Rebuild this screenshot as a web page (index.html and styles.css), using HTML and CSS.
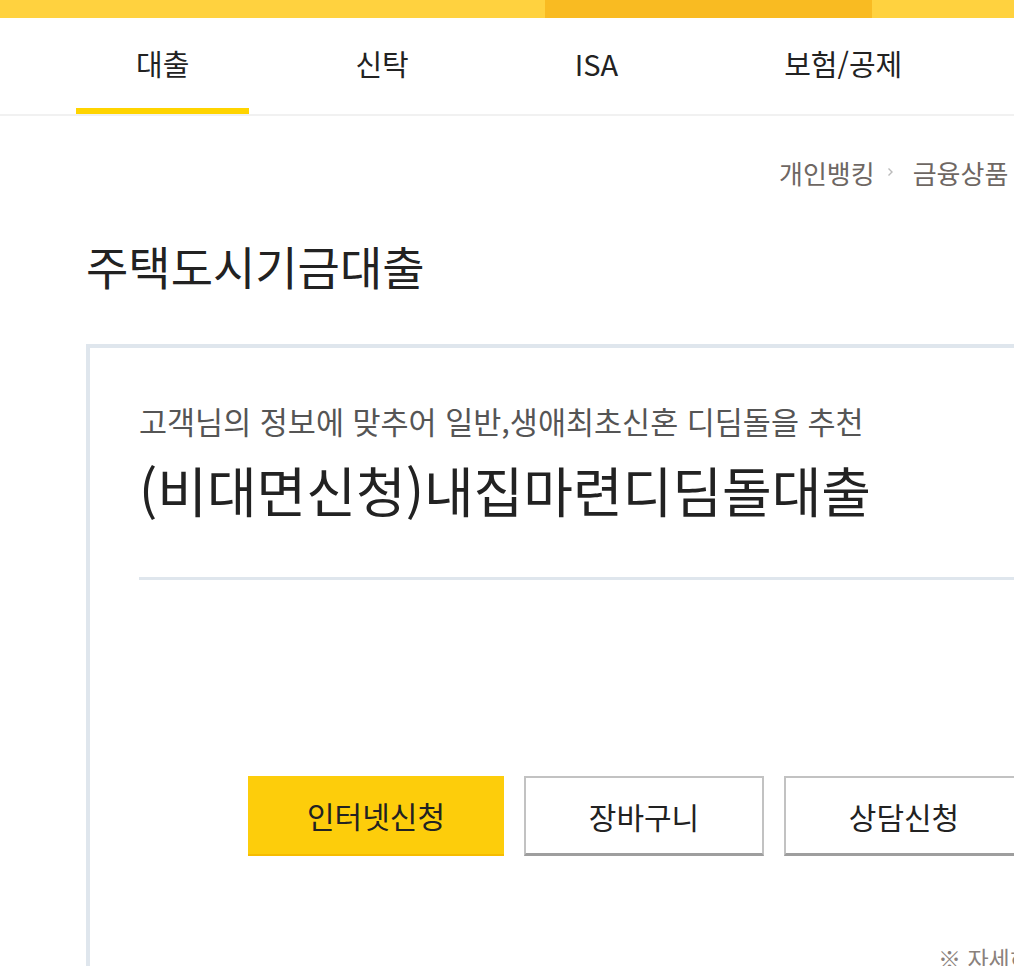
FILE: index.html
```html
<!DOCTYPE html>
<html lang="ko">
<head>
<meta charset="UTF-8">
<meta name="viewport" content="width=device-width, initial-scale=1.0">
<title>주택도시기금대출</title>
<link rel="stylesheet" href="styles.css">
</head>
<body>
<div class="top-bar">
  <div class="top-bar-left"></div>
  <div class="top-bar-mid"></div>
  <div class="top-bar-right"></div>
</div>

<nav class="tabs">
  <a class="tab active" href="#">대출</a>
  <a class="tab" href="#">신탁</a>
  <a class="tab" href="#">ISA</a>
  <a class="tab" href="#">보험/공제</a>
</nav>

<div class="container">
  <div class="breadcrumb">
    <span>개인뱅킹</span>
    <svg class="crumb-arrow" width="7" height="10" viewBox="0 0 7 10"><path d="M1.5 1.5L5 5L1.5 8.5" fill="none" stroke="#bbb" stroke-width="1.4"/></svg>
    <span>금융상품</span>
  </div>

  <h1 class="page-title">주택도시기금대출</h1>

  <div class="product-card">
    <div class="product-head">
      <p class="product-desc">고객님의 정보에 맞추어 일반,생애최초신혼 디딤돌을 추천</p>
      <h2 class="product-name">(비대면신청)내집마련디딤돌대출</h2>
    </div>

    <div class="btn-row">
      <a class="btn btn-primary" href="#">인터넷신청</a>
      <a class="btn" href="#">장바구니</a>
      <a class="btn" href="#">상담신청</a>
    </div>

    <p class="product-note">※ 자세히 보기</p>
  </div>
</div>
</body>
</html>
```

FILE: styles.css
```css
html, body {
    overflow: hidden;
}

body {
    margin: 0;
    padding: 0;
    font-family: "Noto Sans CJK KR", "Noto Sans", sans-serif;
    color: #222;
    background-color: #fff;
}

a {
    color: inherit;
    text-decoration: none;
}

/* Top yellow strip */
.top-bar {
    display: flex;
    height: 18px;
}

.top-bar-left {
    width: 545px;
    background-color: #ffd23f;
}

.top-bar-mid {
    width: 327px;
    background-color: #f9bb22;
}

.top-bar-right {
    flex: 1;
    background-color: #ffd23f;
}

/* Tab menu */
.tabs {
    display: flex;
    gap: 46px;
    height: 96px;
    padding-left: 76px;
    border-bottom: 2px solid #f1f1f1;
}

.tab {
    box-sizing: border-box;
    height: 96px;
    padding: 0 60px;
    line-height: 90px;
    font-size: 29px;
    border-bottom: 6px solid transparent;
    white-space: nowrap;
}

.tab.active {
    border-bottom-color: #ffd400;
}

/* Page body */
.container {
    width: 1100px;
    margin-left: 86px;
}

.breadcrumb {
    display: flex;
    align-items: center;
    margin-top: 41px;
    padding-left: 693px;
    height: 30px;
    font-size: 26px;
    color: #6e6763;
    white-space: nowrap;
}

.crumb-arrow {
    margin: 0 19px 0 12px;
}

.page-title {
    margin: 50px 0 0;
    font-size: 46px;
    font-weight: 400;
    line-height: 56px;
    color: #222;
}

.product-card {
    margin-top: 51px;
    padding: 53px 49px 120px;
    border: 4px solid #dfe6ed;
}

.product-head {
    padding-bottom: 57px;
    border-bottom: 3px solid #dfe6ed;
}

.product-desc {
    margin: 0;
    font-size: 30.5px;
    line-height: 40px;
    color: #555;
    white-space: nowrap;
}

.product-name {
    margin: 19px 0 0;
    font-size: 54px;
    font-weight: 400;
    line-height: 60px;
    color: #222;
    white-space: nowrap;
}

.btn-row {
    display: flex;
    justify-content: center;
    gap: 20px;
    margin-top: 196px;
}

.btn {
    box-sizing: border-box;
    width: 240px;
    height: 80px;
    display: flex;
    align-items: center;
    justify-content: center;
    font-size: 30px;
    color: #222;
    background-color: #fff;
    border: 2px solid #c2c2c2;
    border-bottom: 3px solid #9e9e9e;
}

.btn-primary {
    width: 256px;
    background-color: #fdcd0b;
    border: none;
    border-bottom: 2px solid #f6bc00;
}

.product-note {
    margin: 87px 0 0;
    padding-left: 799px;
    font-size: 23px;
    line-height: 30px;
    color: #8a817c;
    white-space: nowrap;
}
```
